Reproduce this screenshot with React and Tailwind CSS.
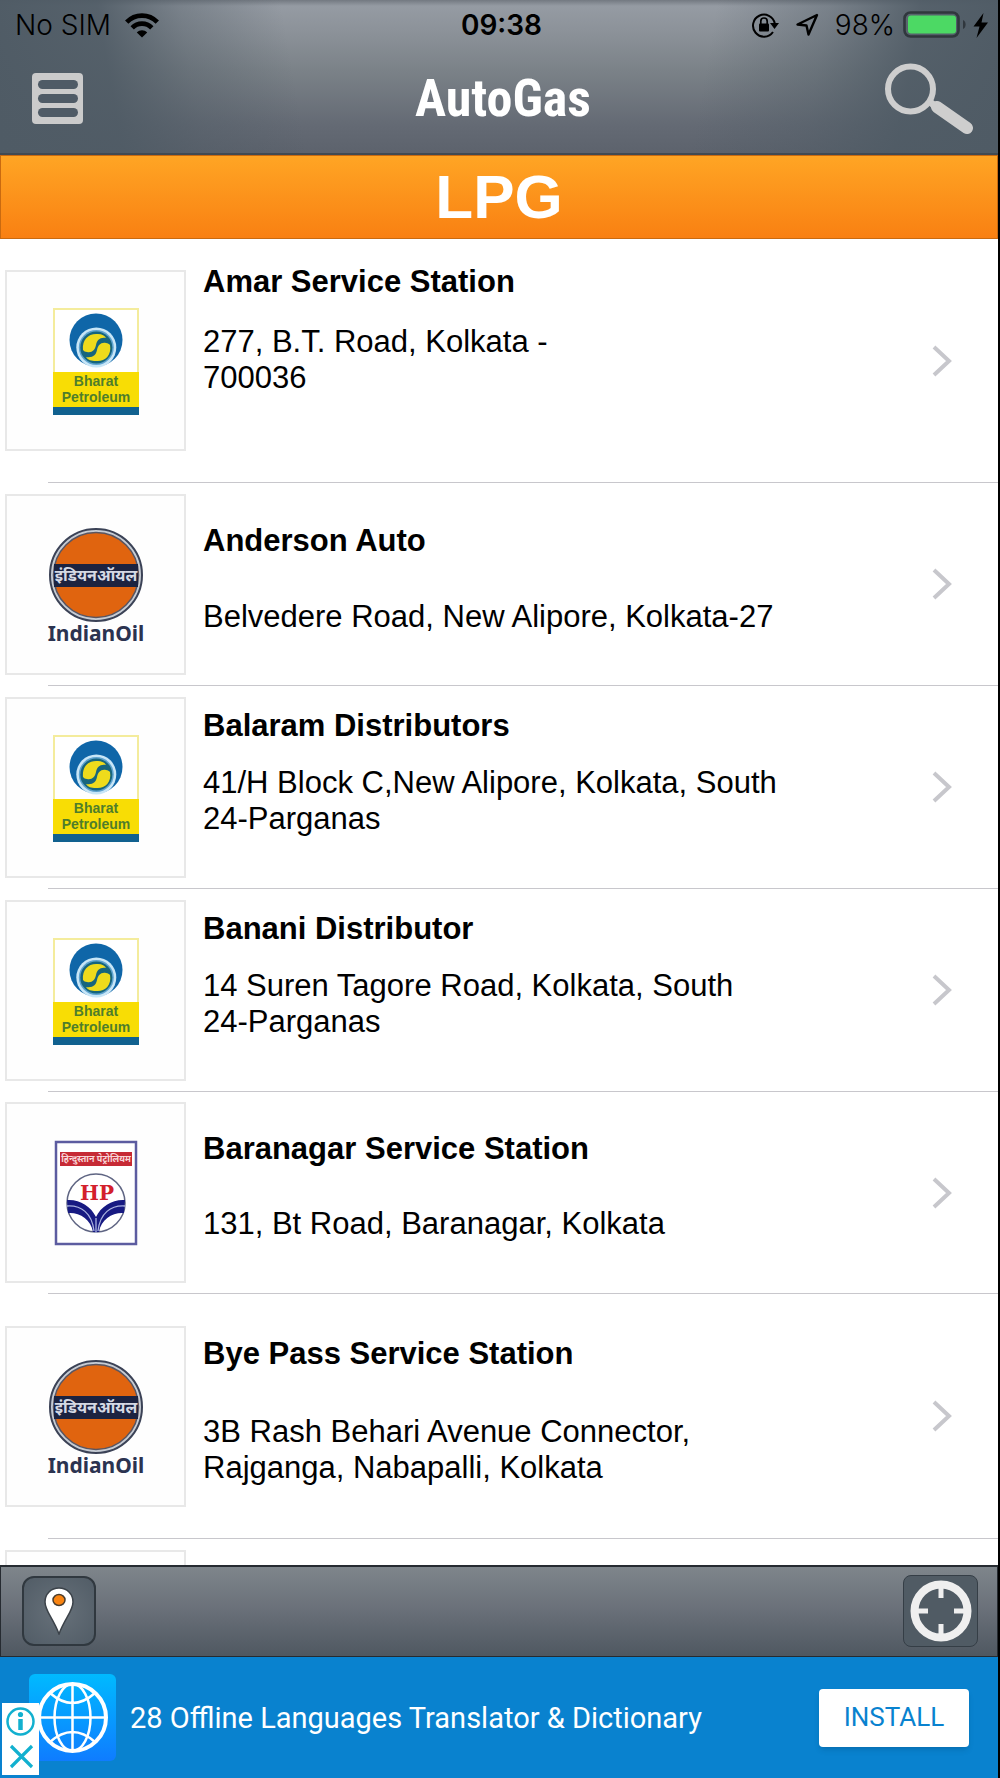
import React from "react";

const stations = [
  { name: "Amar Service Station", address: "277, B.T. Road, Kolkata -\n700036", brand: "bharat", row: "h-[243px]", text: "pt-[25px] gap-6" },
  { name: "Anderson Auto", address: "Belvedere Road, New Alipore, Kolkata-27", brand: "indian", row: "h-[202px]", text: "pt-10 gap-10" },
  { name: "Balaram Distributors", address: "41/H Block C,New Alipore, Kolkata, South\n24-Parganas", brand: "bharat", row: "h-[202px]", text: "pt-[22px] gap-[21px]" },
  { name: "Banani Distributor", address: "14 Suren Tagore Road, Kolkata, South\n24-Parganas", brand: "bharat", row: "h-[202px]", text: "pt-[22px] gap-[21px]" },
  { name: "Baranagar Service Station", address: "131, Bt Road, Baranagar, Kolkata", brand: "hp", row: "h-[201px]", text: "pt-[39px] gap-[39px]" },
  { name: "Bye Pass Service Station", address: "3B Rash Behari Avenue Connector,\nRajganga, Nabapalli, Kolkata", brand: "indian", row: "h-[244px]", text: "pt-[42px] gap-[42px]" },
];

function BharatLogo() {
  return (
    <svg viewBox="2 2 177 177" className="size-full" aria-hidden="true">
      <rect x="49" y="39" width="84" height="98" fill="#fff" stroke="#f4ec9c" strokeWidth="2" />
      <circle cx="91" cy="70" r="26.5" fill="#0f66a8" />
      <circle cx="91.3" cy="77.5" r="20" fill="#c8e6f7" />
      <circle cx="91.3" cy="77.5" r="17.5" fill="#5ea3cf" />
      <circle cx="91.3" cy="77.5" r="16" fill="#17657d" />
      <path d="M78 80C77 69 84 63 93 64C97 64 100 66 101 68C95 67 92 70 91 75C90 80 87 83 82 82C80 82 79 81 78 80Z" fill="#eedb1c" />
      <path d="M105 75C107 86 99 92 91 91C86 91 83 90 81 87C88 88 91 85 92 80C93 75 96 72 101 73C103 73 104 74 105 75Z" fill="#eedb1c" />
      <rect x="48" y="102" width="86" height="35" fill="#f8dd05" />
      <rect x="48" y="137" width="86" height="8" fill="#11618f" />
      <text x="91" y="116" textAnchor="middle" fill="#4f7d2b" className="font-['Liberation_Sans',sans-serif] text-[14px] font-bold">Bharat</text>
      <text x="91" y="132" textAnchor="middle" fill="#4f7d2b" className="font-['Liberation_Sans',sans-serif] text-[14px] font-bold">Petroleum</text>
    </svg>
  );
}

function IndianOilLogo() {
  return (
    <svg viewBox="2 2 177 177" className="size-full" aria-hidden="true">
      <circle cx="91" cy="81" r="46" fill="#c6ccd4" stroke="#3b4256" strokeWidth="2" />
      <circle cx="91" cy="81" r="42.5" fill="#e0640f" stroke="#5a5560" strokeWidth="1.5" />
      <rect x="49" y="70" width="84" height="23" fill="#1c2340" />
      <text x="91" y="87" textAnchor="middle" fill="#d5d9e4" className="font-['Noto_Sans_Devanagari','Noto_Sans',sans-serif] text-[16px] font-bold">इंडियनऑयल</text>
      <text x="91" y="147" textAnchor="middle" fill="#2b3350" className="font-['Noto_Sans',sans-serif] text-[21px] font-bold">IndianOil</text>
    </svg>
  );
}

function HpLogo() {
  return (
    <svg viewBox="2 2 177 177" className="size-full" aria-hidden="true">
      <rect x="51" y="40" width="80" height="102" fill="#fff" stroke="#5c5ca0" strokeWidth="2.5" />
      <rect x="55" y="50" width="72" height="14" fill="#c62a35" />
      <text x="91" y="60" textAnchor="middle" fill="#f8d5d8" className="font-['Noto_Sans_Devanagari','Noto_Sans',sans-serif] text-[9px] font-bold">हिन्दुस्तान पेट्रोलियम</text>
      <circle cx="91" cy="101" r="29" fill="#fff" stroke="#5f6583" strokeWidth="1.5" />
      <text x="92" y="98" textAnchor="middle" fill="#d3202c" className="font-['DejaVu_Serif',serif] text-[20px] font-bold">HP</text>
      <path d="M62 98C74 97 86 104 91 115C96 104 108 97 120 98L119 111C108 110 96 117 94 130H88C86 117 74 110 63 111Z" fill="#171a82" />
      <path d="M62 104C76 103 87 111 89 129M120 104C106 103 95 111 93 129M91 116V131" fill="none" stroke="#aab2df" strokeWidth="1.3" />
    </svg>
  );
}

const logos = { bharat: BharatLogo, indian: IndianOilLogo, hp: HpLogo };

function Tile({ children }) {
  return <div className="size-[181px] shrink-0 border-2 border-[#e8e8e8] bg-[#fefefe]">{children}</div>;
}

function StationRow({ station }) {
  const Logo = logos[station.brand];
  return (
    <li>
      <a href="#station" className={`flex items-center pl-[5px] pr-[46px] ${station.row}`}>
        <Tile><Logo /></Tile>
        <div className={`ml-[17px] flex min-w-0 flex-1 flex-col self-start text-[31px] leading-9 text-black ${station.text}`}>
          <h2 className="font-bold">{station.name}</h2>
          <p className="whitespace-pre-line">{station.address}</p>
        </div>
        <svg viewBox="0 0 20 32" className="h-8 w-5 shrink-0" fill="none" stroke="#c7c7cc" strokeWidth="4" aria-hidden="true">
          <path d="M2 2L17 16L2 30" />
        </svg>
      </a>
      <div className="ml-12 h-px bg-[#c8c7cc]" />
    </li>
  );
}

function StatusBar() {
  return (
    <div className="grid h-[50px] grid-cols-[1fr_auto_1fr] items-center pl-[15px] pr-[10px] font-['Inter',sans-serif] text-[28px] leading-8 text-black">
      <div className="flex items-center gap-[14px]">
        <span className="font-light">No SIM</span>
        <svg viewBox="0 0 34 25" className="h-[25px] w-[34px]" aria-hidden="true">
          <g fill="none" stroke="#000" strokeWidth="4.6">
            <path d="M1.7 9.2C10 0.4 24 0.4 32.3 9.2" />
            <path d="M7.2 14.8C12.6 9.2 21.4 9.2 26.8 14.8" />
          </g>
          <path d="M11.8 19.4C14.8 16.6 19.2 16.6 22.2 19.4L17 24.6Z" />
        </svg>
      </div>
      <span className="font-semibold">09:38</span>
      <div className="flex items-center justify-end">
        <svg viewBox="0 0 28 26" className="mr-4 h-[26px] w-7" aria-hidden="true">
          <path d="M22 20A11 11 0 1 1 23.8 11.5" fill="none" stroke="#000" strokeWidth="2" />
          <path d="M19 11H28L23.5 17Z" />
          <rect x="8" y="11.5" width="10" height="8" rx="1" />
          <path d="M9.8 12V9.2A3.2 3.2 0 0 1 16.2 9.2V12" fill="none" stroke="#000" strokeWidth="1.7" />
        </svg>
        <svg viewBox="0 0 24 24" className="mr-4 h-6 w-6" fill="none" stroke="#000" strokeWidth="2.4" strokeLinejoin="round" aria-hidden="true">
          <path d="M22 2L2.5 11.5L11.5 12.5L13.5 21.5Z" />
        </svg>
        <span className="mr-2 font-light">98%</span>
        <svg viewBox="0 0 64 28" className="mr-[6px] h-7 w-16" aria-hidden="true">
          <rect x="1.5" y="1.5" width="54" height="24" rx="6" fill="none" stroke="#30373d" strokeWidth="2.6" />
          <rect x="5" y="4.5" width="48" height="18" rx="3" fill="#4cd964" />
          <path d="M60 9C63.5 10.5 63.5 16.5 60 18Z" fill="#30373d" />
        </svg>
        <svg viewBox="0 0 15 25" className="h-[25px] w-[15px]" aria-hidden="true">
          <path d="M10.5 0L0.5 13.5H6.5L3.5 25L15 9.5H8.5Z" />
        </svg>
      </div>
    </div>
  );
}

function Header() {
  return (
    <header className="flex h-[155px] shrink-0 flex-col border-b-2 border-[#414a52] bg-[linear-gradient(80deg,#4f5b65_0%,#4f5b65e6_12%,#4f5b6566_20%,#4f5b6500_30%),linear-gradient(280deg,#4f5b65_0%,#4f5b65e6_10%,#4f5b6566_19%,#4f5b6500_30%),linear-gradient(180deg,#737981_0px,#959ba3_6px,#8b9198_34px,#7b8288_70px,#646a74_125px,#5d636d_152px)]">
      <StatusBar />
      <div className="grid flex-1 grid-cols-[1fr_auto_1fr] items-center pb-[6px] pl-8 pr-6">
        <button type="button" aria-label="Menu" className="size-[51px]">
          <svg viewBox="0 0 51 51" className="size-full" aria-hidden="true">
            <rect width="51" height="51" rx="4" fill="#cbcbcb" />
            <g fill="#4f5b66">
              <rect x="6" y="7" width="40" height="9" rx="4.5" />
              <rect x="6" y="21" width="40" height="9" rx="4.5" />
              <rect x="6" y="35" width="40" height="9" rx="4.5" />
            </g>
          </svg>
        </button>
        <h1 className="font-['Roboto_Condensed','Roboto',sans-serif] text-[52px] font-bold leading-none text-white">AutoGas</h1>
        <button type="button" aria-label="Search" className="h-[72px] w-[90px] justify-self-end">
          <svg viewBox="0 0 90 72" className="size-full" fill="none" stroke="#cecece" aria-hidden="true">
            <circle cx="26.5" cy="26" r="22.5" strokeWidth="6" />
            <path d="M44 37L54 46" strokeWidth="7" />
            <path d="M53 44L83 65" strokeWidth="12" strokeLinecap="round" />
          </svg>
        </button>
      </div>
    </header>
  );
}

function Toolbar() {
  return (
    <nav className="flex h-[92px] shrink-0 items-center justify-between border border-t-2 border-[#262b31] bg-[linear-gradient(180deg,#7e858b,#6b717a_45%,#4f5861)] pb-[2px] pl-[21px] pr-[19px]">
      <button type="button" aria-label="Map" className="flex h-[70px] w-[74px] items-center justify-center rounded-xl border-2 border-[#30383f] bg-[radial-gradient(#67717a,#515c66)]">
        <svg viewBox="0 0 30 48" className="h-12 w-[30px]" aria-hidden="true">
          <path d="M15 1C7 1 1 7 1 15C1 24 9 31 15 47C21 31 29 24 29 15C29 7 23 1 15 1Z" fill="#fff" stroke="#3b4249" strokeWidth="1.5" />
          <ellipse cx="15" cy="13" rx="6" ry="5.5" fill="#f98411" stroke="#4a3c2c" strokeWidth="1.5" />
        </svg>
      </button>
      <button type="button" aria-label="Locate me" className="flex h-[72px] w-[75px] items-center justify-center rounded-lg border border-[#353e46] bg-[#505b64]">
        <svg viewBox="0 0 62 62" className="size-[62px]" fill="none" stroke="#efefef" aria-hidden="true">
          <circle cx="31" cy="31" r="26.5" strokeWidth="8" />
          <path d="M31 8V18M31 44V54M8 31H18M44 31H54" strokeWidth="5" />
        </svg>
      </button>
    </nav>
  );
}

function AdBanner() {
  return (
    <aside className="relative flex h-[121px] shrink-0 items-center bg-[#0982cf] pl-[29px] pr-[29px] font-['Roboto',sans-serif]">
      <svg viewBox="0 0 87 87" className="size-[87px] shrink-0" aria-hidden="true">
        <defs>
          <linearGradient id="globe" x2="0" y2="1">
            <stop stopColor="#00baff" />
            <stop offset="1" stopColor="#0f7cff" />
          </linearGradient>
        </defs>
        <rect width="87" height="87" rx="6" fill="url(#globe)" />
        <g fill="none" stroke="#fff" strokeWidth="2.5">
          <circle cx="43.5" cy="43.5" r="33.5" strokeWidth="4" />
          <ellipse cx="43.5" cy="43.5" rx="18" ry="33.5" />
          <path d="M43.5 10V77M10 43.5H77M21 19Q43.5 39 66 19M21 68Q43.5 48 66 68" />
        </g>
      </svg>
      <p className="ml-[14px] flex-1 text-[29px] leading-9 text-white">28 Offline Languages Translator &amp; Dictionary</p>
      <button type="button" className="h-[58px] w-[150px] shrink-0 rounded bg-white text-[26px] text-[#0982cf] shadow-md">INSTALL</button>
      <div className="absolute bottom-[3px] left-[2px] flex h-[72px] w-[37px] flex-col items-center justify-between bg-white py-1">
        <button type="button" aria-label="Ad information" className="size-[29px]">
          <svg viewBox="0 0 29 29" className="size-full" fill="none" stroke="#12b0cf" aria-hidden="true">
            <circle cx="14.5" cy="14.5" r="13" strokeWidth="2.5" />
            <path d="M14.5 12V23" strokeWidth="4.5" />
            <circle cx="14.5" cy="7.5" r="2.6" fill="#12b0cf" stroke="none" />
          </svg>
        </button>
        <button type="button" aria-label="Close ad" className="size-[28px]">
          <svg viewBox="0 0 28 28" className="size-full" fill="none" stroke="#12b0cf" strokeWidth="3.2" aria-hidden="true">
            <path d="M4 3L25 24M25 3L4 24" />
          </svg>
        </button>
      </div>
    </aside>
  );
}

export default function App() {
  return (
    <div className="flex h-screen flex-col border-r-2 border-black bg-white font-['Liberation_Sans',Arial,sans-serif]">
      <Header />
      <div className="flex h-[84px] shrink-0 items-center justify-center border border-[#c96a10] bg-[linear-gradient(180deg,#ffa524,#f98012)]">
        <h2 className="text-[62px] font-bold leading-none text-white">LPG</h2>
      </div>
      <ul className="min-h-0 flex-1 overflow-y-auto [scrollbar-width:none]">
        {stations.map((station) => (
          <StationRow key={station.name} station={station} />
        ))}
        <li className="flex h-[202px] items-center pl-[5px]">
          <Tile />
        </li>
      </ul>
      <Toolbar />
      <AdBanner />
    </div>
  );
}
